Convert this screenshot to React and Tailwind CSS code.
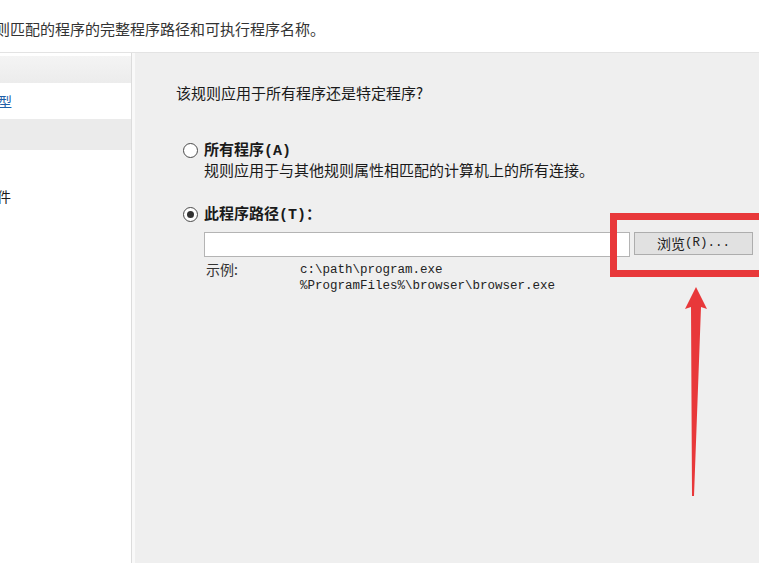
import React from "react";

export default function App() {
  const cjk = { fontFamily: '"Noto Sans CJK SC", "Microsoft YaHei", sans-serif' };
  const mono = { fontFamily: '"Liberation Mono", monospace' };
  return (
    <div
      className="relative w-[759px] h-[563px] overflow-hidden bg-white text-[#1a1a1a]"
      style={cjk}
    >
      {/* header */}
      <div className="h-[53px] border-b border-[#e3e3e3] flex items-center">
        <div className="ml-[-5px] mt-[5px] text-[15px] leading-[20px] text-[#333] whitespace-nowrap">
          则匹配的程序的完整程序路径和可执行程序名称。
        </div>
      </div>

      <div className="flex h-[510px]">
        {/* left nav */}
        <div className="w-[132px] border-r border-[#dcdcdc] bg-white pt-[3px]">
          <div className="h-[27px] bg-gradient-to-b from-[#f4f4f4] to-[#ececec]" />
          <div className="h-[36px] flex items-center bg-white">
            <span className="ml-[-2px] text-[14px] text-[#1f5fa8]">型</span>
          </div>
          <div className="h-[31px] bg-[#ebebeb]" />
          <div className="h-[62px] flex items-end">
            <span className="ml-[-3px] mb-[6px] text-[14px] leading-[20px]">件</span>
          </div>
        </div>
        <div className="w-[3px] bg-[#f9f9f9]" />

        {/* right panel */}
        <div className="flex-1 bg-[#efefef] pt-[30px]">
          <div className="ml-[41px] text-[15px] leading-[20px]">
            该规则应用于所有程序还是特定程序?
          </div>

          <div className="mt-[37px] ml-[48px] flex items-center h-[20px]">
            <span className="w-[15px] h-[15px] rounded-full border border-[#4a4a4a] bg-white" />
            <span className="ml-[6px] text-[15px] font-bold leading-[20px]">
              所有程序<span style={mono}>(A)</span>
            </span>
          </div>
          <div className="ml-[69px] text-[15px] leading-[20px]">
            规则应用于与其他规则属性相匹配的计算机上的所有连接。
          </div>

          <div className="mt-[24px] ml-[48px] flex items-center h-[20px]">
            <span className="w-[15px] h-[15px] rounded-full border border-[#4a4a4a] bg-white flex items-center justify-center">
              <span className="w-[7px] h-[7px] rounded-full bg-[#333]" />
            </span>
            <span className="ml-[6px] text-[15px] font-bold leading-[20px]">
              此程序路径<span style={mono}>(T)</span>：
            </span>
          </div>

          <div className="mt-[8px] ml-[69px] flex items-start">
            <div className="w-[426px] h-[25px] bg-white border border-[#b4b4b4]" />
            <div className="ml-[4px] w-[119px] h-[23px] bg-[#e1e1e1] border border-[#adadad] flex items-center justify-center text-[14px] text-[#222]">
              浏览<span className="text-[12.5px]" style={mono}>(R)...</span>
            </div>
          </div>

          <div className="mt-[4px] ml-[71px] flex">
            <div className="w-[94px] text-[14px] leading-[16px] text-[#333]">示例:</div>
            <div className="text-[12.5px] leading-[16px] text-[#222] mt-[1px]" style={mono}>
              <div>c:\path\program.exe</div>
              <div>%ProgramFiles%\browser\browser.exe</div>
            </div>
          </div>
        </div>
      </div>

      {/* annotation: red box */}
      <div className="absolute left-[610px] top-[213px] w-[170px] h-[64px] border-[7px] border-[#e8383a]" />

      {/* annotation: arrow */}
      <svg className="absolute left-0 top-0" width="759" height="563" viewBox="0 0 759 563">
        <polygon
          points="696,287 707,309 701,307 694,496 692,496 691,307 685,309"
          fill="#e8383a"
        />
      </svg>
    </div>
  );
}
